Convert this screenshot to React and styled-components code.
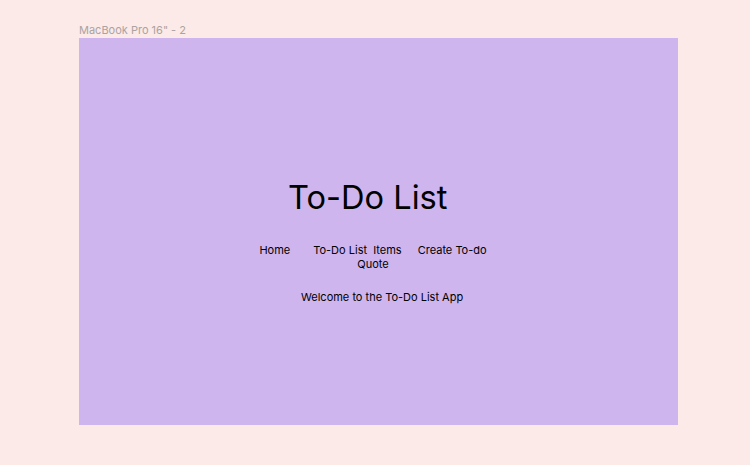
import React from 'react';
import styled, { createGlobalStyle } from 'styled-components';

const GlobalStyle = createGlobalStyle`
  html, body {
    margin: 0;
    padding: 0;
    background: #fbeae8;
    font-family: 'Inter', 'Noto Sans', sans-serif;
  }
`;

const Canvas = styled.div`
  display: flex;
  flex-direction: column;
  padding: 23px 0 0 79px;
`;

const FrameLabel = styled.div`
  font-size: 11px;
  line-height: 15px;
  color: #aba2a2;
`;

const Frame = styled.main`
  display: flex;
  flex-direction: column;
  align-items: flex-start;
  width: 599px;
  height: 387px;
  box-sizing: border-box;
  padding-top: 139px;
  background: #ceb5ee;
  color: #000;
`;

const Title = styled.h1`
  margin: 0 0 27px 209px;
  font-size: 32.6px;
  line-height: 40px;
  font-weight: 400;
`;

const Nav = styled.nav`
  display: flex;
  flex-wrap: wrap;
  justify-content: center;
  width: 236px;
  margin-left: 176px;
  font-size: 11px;
  line-height: 13.5px;
`;

const NavLink = styled.a`
  color: inherit;
  text-decoration: none;
  white-space: pre;
  margin-right: ${({ $gap }) => $gap || 0}px;
`;

const Welcome = styled.p`
  margin: 19px 0 0 222px;
  font-size: 11px;
  line-height: 15px;
`;

const links = [
  { label: 'Home', gap: 23 },
  { label: 'To-Do List  Items', gap: 16 },
  { label: 'Create To-do' },
  { label: 'Quote' },
];

const App = () => (
  <>
    <GlobalStyle />
    <Canvas>
      <FrameLabel>MacBook Pro 16" - 2</FrameLabel>
      <Frame>
        <Title>To-Do List</Title>
        <Nav>
          {links.map(({ label, gap }) => (
            <NavLink key={label} href="#" $gap={gap}>{label}</NavLink>
          ))}
        </Nav>
        <Welcome>Welcome to the To-Do List App</Welcome>
      </Frame>
    </Canvas>
  </>
);

export default App;
